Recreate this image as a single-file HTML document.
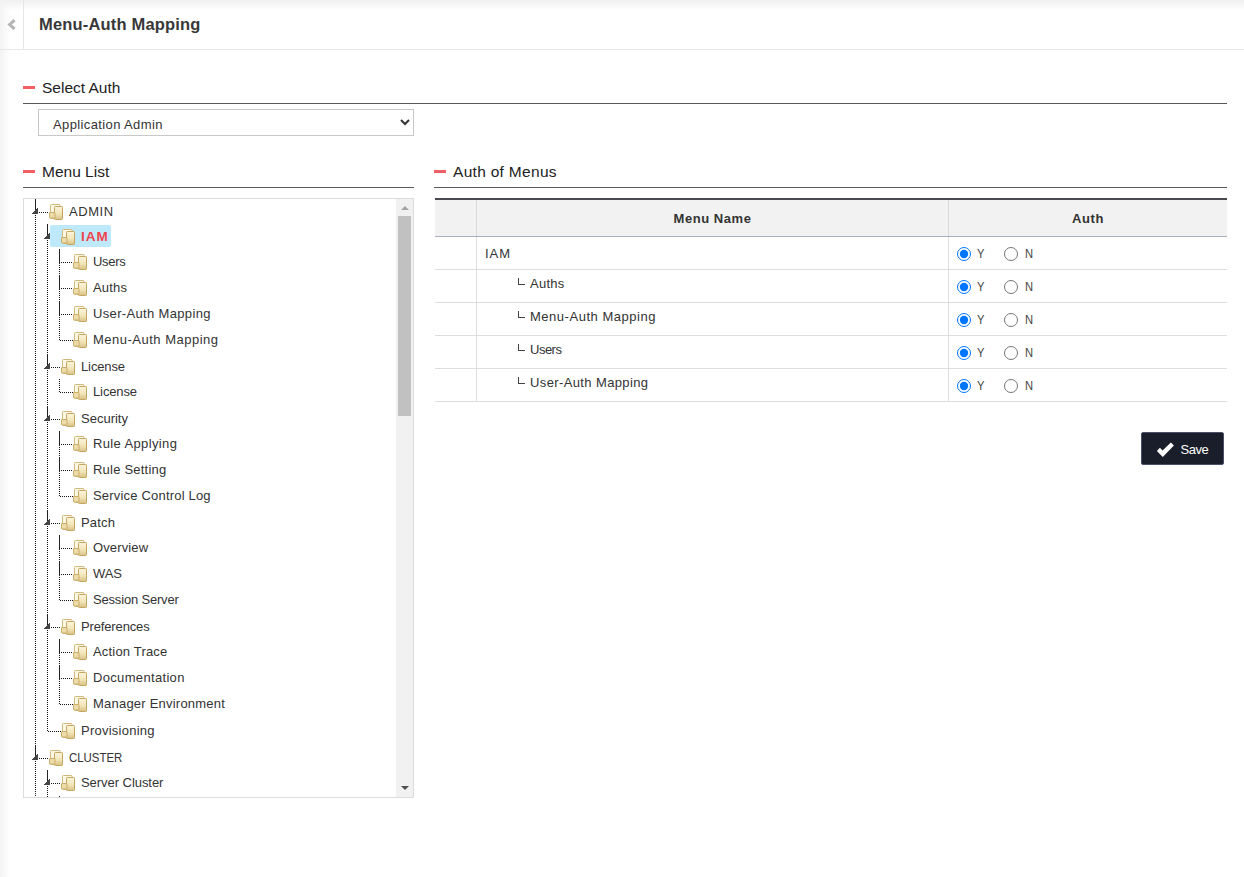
<!DOCTYPE html>
<html><head><meta charset="utf-8">
<style>
*{box-sizing:border-box}
html,body{margin:0;padding:0;width:1244px;height:877px;overflow:hidden;background:#fff;font-family:"Liberation Sans",sans-serif;color:#333}
.shadow-top{position:absolute;left:0;top:0;width:1244px;height:10px;background:linear-gradient(to bottom,#f0f0f0,rgba(255,255,255,0))}
.shadow-left{position:absolute;left:0;top:0;width:10px;height:877px;background:linear-gradient(to right,#f3f3f3,rgba(255,255,255,0))}
.hdr-sep{position:absolute;left:23px;top:0;width:1px;height:49px;background:#e6e6e6}
.hdr-line{position:absolute;left:0;top:49px;width:1244px;height:1px;background:#e8e8e8}
.back{position:absolute;left:7px;top:19px}
.title{position:absolute;left:39px;top:14px;font-size:16.5px;font-weight:bold;line-height:20px;color:#383838;white-space:nowrap;letter-spacing:0.18px}
.sec{position:absolute;height:18px}
.sec .dash{position:absolute;left:0;width:12px;height:3px;background:#f15f64}
.sec .st{position:absolute;left:19px;font-size:15.5px;line-height:18px;color:#222;white-space:nowrap}
.uline{position:absolute;height:1px;background:#58595d}
select{position:absolute;left:38px;top:109px;width:376px;height:27px;border:1px solid #c8c8c8;background:#fff;font-family:"Liberation Sans",sans-serif;font-size:13px;color:#333;padding:4px 0 0 10px;border-radius:0;outline:none;letter-spacing:0.38px}
.tree{position:absolute;left:23px;top:198px;width:391px;height:600px;border:1px solid #dcdcdc;overflow:hidden;background:#fff}
.tree i, .tree span{position:absolute;display:block}
.vd{width:1px;background:repeating-linear-gradient(to bottom,#111 0,#111 1px,transparent 1px,transparent 2px)}
.vs{width:1px;background:#222}
.hd{height:1px;background:repeating-linear-gradient(to right,#111 0,#111 1px,transparent 1px,transparent 2px)}
.tri{width:6px;height:6px;background:linear-gradient(to bottom right,transparent 46%,#444 50%)}
.sel{width:61px;height:22px;background:#bee9fb;border-radius:2px}
.fo{width:15px;height:17px}
.fo svg{display:block}
.tt{font-size:13px;line-height:16px;white-space:nowrap;color:#333}
.tt.red{color:#f0444f;font-weight:bold;letter-spacing:0.9px!important;transform:scaleX(1.04);transform-origin:0 0}
.sb{position:absolute;left:372px;top:0;width:17px;height:598px;background:#f1f1f1}
.sb .thumb{position:absolute;left:2px;top:17px;width:13px;height:200px;background:#c1c1c1}
.sb .up{position:absolute;left:5px;top:7px;width:0;height:0;border-left:4px solid transparent;border-right:4px solid transparent;border-bottom:4px solid #a3a3a3}
.sb .dn{position:absolute;left:5px;top:587px;width:0;height:0;border-left:4px solid transparent;border-right:4px solid transparent;border-top:4px solid #505050}
.tbl{position:absolute;left:435px;top:198px;width:792px;height:204px}
.th{position:absolute;left:0;top:0;width:792px;height:39px;background:#f2f2f2;border-top:2px solid #47494f;border-bottom:1px solid #a9afbd}
.th .c1{position:absolute;left:0;top:0;width:42px;height:36px;border-right:1px solid #d9d9d9}
.th .h{position:absolute;top:11px;font-size:13px;font-weight:bold;line-height:16px;text-align:center;color:#333;letter-spacing:0.55px}
.tr{position:absolute;left:0;width:792px;height:33px;border-bottom:1px solid #dedede}
.tr .c1{position:absolute;left:0;top:0;width:42px;height:32px;border-right:1px solid #dedede}
.tr .c2{position:absolute;left:42px;top:0;width:472px;height:32px;border-right:1px solid #dedede}
.tr .c3{position:absolute;left:514px;top:0;width:278px;height:32px}
.tn{position:absolute;font-size:13px;line-height:16px;white-space:nowrap;color:#333}
.corner{position:absolute;left:41px;top:8px;width:7px;height:7px;border-left:1px solid #444;border-bottom:1px solid #444}
.c3 input{position:absolute;margin:0;width:14px;height:14px;top:10px}
.ry{left:8px}
.rn{left:55px}
.yl,.nl{position:absolute;top:9px;font-size:13px;line-height:16px;color:#444;transform:scaleX(0.86);transform-origin:0 0}
.yl{left:28px}
.nl{left:75.5px}
.btn{position:absolute;left:1141px;top:432px;width:83px;height:33px;background:#1a1e2b;border:1px solid #4a5068;border-radius:2px}
.btn svg{position:absolute;left:10px;top:5px}
.btn span{position:absolute;left:38.5px;top:9px;font-size:13px;line-height:16px;color:#fff;letter-spacing:-0.5px}
</style></head><body>
<svg width="0" height="0" style="position:absolute">
<defs>
<linearGradient id="fg" x1="0" y1="0" x2="0" y2="1">
<stop offset="0" stop-color="#fbf5dc"/><stop offset="0.55" stop-color="#f2e6b8"/><stop offset="1" stop-color="#d8c186"/>
</linearGradient>
<g id="fold">
<rect x="1.5" y="0.5" width="9.5" height="14" rx="0.8" fill="#fdf8e6" stroke="#d2b97c"/>
<rect x="5.5" y="2.5" width="8" height="13" rx="0.8" fill="url(#fg)" stroke="#c4a660"/>
<rect x="0.5" y="8.5" width="5.5" height="5.5" rx="0.5" fill="#ecdcaa" stroke="#c9ad6a"/>
</g>
</defs></svg>
<div class="shadow-top"></div>
<div class="shadow-left"></div>
<div class="hdr-sep"></div>
<div class="hdr-line"></div>
<svg class="back" width="10" height="12" viewBox="0 0 10 12"><path d="M7.6 1.2 L2.6 5.6 L7.6 10" fill="none" stroke="#b5b5b5" stroke-width="3"/></svg>
<div class="title">Menu-Auth Mapping</div>

<div class="sec" style="left:23px;top:79px"><div class="dash" style="top:7px"></div><div class="st" style="top:0">Select Auth</div></div>
<div class="uline" style="left:23px;top:103px;width:1204px"></div>
<select><option>Application Admin</option></select>

<div class="sec" style="left:23px;top:163px"><div class="dash" style="top:7px"></div><div class="st" style="top:0">Menu List</div></div>
<div class="uline" style="left:23px;top:187px;width:391px"></div>

<div class="sec" style="left:434px;top:163px"><div class="dash" style="top:7px"></div><div class="st" style="top:0;letter-spacing:0.3px">Auth of Menus</div></div>
<div class="uline" style="left:434px;top:187px;width:793px"></div>

<div class="tree">
<i class="vd" style="left:11px;top:16px;height:583px"></i>
<i class="vd" style="left:23px;top:25px;height:508px"></i>
<i class="vd" style="left:35px;top:50px;height:92px"></i>
<i class="vd" style="left:35px;top:180px;height:14px"></i>
<i class="vd" style="left:35px;top:232px;height:66px"></i>
<i class="vd" style="left:35px;top:336px;height:66px"></i>
<i class="vd" style="left:35px;top:440px;height:66px"></i>
<i class="vd" style="left:23px;top:571px;height:28px"></i>
<i class="vd" style="left:35px;top:597px;height:2px"></i>
<i class="vs" style="left:11px;top:0px;height:12px"></i>
<i class="tri" style="left:8px;top:9px"></i>
<i class="hd" style="left:15px;top:13px;width:10px"></i>
<i class="fo" style="left:25px;top:5px"><svg width="15" height="17" viewBox="0 0 15 17"><use href="#fold"/></svg></i>
<span class="tt" style="left:45px;top:5px;letter-spacing:0.55px;">ADMIN</span>
<i class="vs" style="left:23px;top:25px;height:12px"></i>
<i class="tri" style="left:20px;top:34px"></i>
<i class="hd" style="left:27px;top:38px;width:10px"></i>
<i class="sel" style="left:26px;top:26px"></i>
<i class="fo" style="left:37px;top:30px"><svg width="15" height="17" viewBox="0 0 15 17"><use href="#fold"/></svg></i>
<span class="tt red" style="left:57px;top:30px;letter-spacing:0.0px;">IAM</span>
<i class="vs" style="left:35px;top:50px;height:15px"></i>
<i class="hd" style="left:37px;top:63px;width:12px"></i>
<i class="fo" style="left:49px;top:55px"><svg width="15" height="17" viewBox="0 0 15 17"><use href="#fold"/></svg></i>
<span class="tt" style="left:69px;top:55px;letter-spacing:-0.3px;">Users</span>
<i class="vs" style="left:35px;top:76px;height:15px"></i>
<i class="hd" style="left:37px;top:89px;width:12px"></i>
<i class="fo" style="left:49px;top:81px"><svg width="15" height="17" viewBox="0 0 15 17"><use href="#fold"/></svg></i>
<span class="tt" style="left:69px;top:81px;letter-spacing:0.2px;">Auths</span>
<i class="vs" style="left:35px;top:102px;height:15px"></i>
<i class="hd" style="left:37px;top:115px;width:12px"></i>
<i class="fo" style="left:49px;top:107px"><svg width="15" height="17" viewBox="0 0 15 17"><use href="#fold"/></svg></i>
<span class="tt" style="left:69px;top:107px;letter-spacing:0.34px;">User-Auth Mapping</span>
<i class="hd" style="left:36px;top:141px;width:13px"></i>
<i class="fo" style="left:49px;top:133px"><svg width="15" height="17" viewBox="0 0 15 17"><use href="#fold"/></svg></i>
<span class="tt" style="left:69px;top:133px;letter-spacing:0.5px;">Menu-Auth Mapping</span>
<i class="vs" style="left:23px;top:155px;height:12px"></i>
<i class="tri" style="left:20px;top:164px"></i>
<i class="hd" style="left:27px;top:168px;width:10px"></i>
<i class="fo" style="left:37px;top:160px"><svg width="15" height="17" viewBox="0 0 15 17"><use href="#fold"/></svg></i>
<span class="tt" style="left:57px;top:160px;letter-spacing:-0.12px;">License</span>
<i class="hd" style="left:36px;top:193px;width:13px"></i>
<i class="fo" style="left:49px;top:185px"><svg width="15" height="17" viewBox="0 0 15 17"><use href="#fold"/></svg></i>
<span class="tt" style="left:69px;top:185px;letter-spacing:-0.12px;">License</span>
<i class="vs" style="left:23px;top:207px;height:12px"></i>
<i class="tri" style="left:20px;top:216px"></i>
<i class="hd" style="left:27px;top:220px;width:10px"></i>
<i class="fo" style="left:37px;top:212px"><svg width="15" height="17" viewBox="0 0 15 17"><use href="#fold"/></svg></i>
<span class="tt" style="left:57px;top:212px;letter-spacing:0.0px;">Security</span>
<i class="vs" style="left:35px;top:232px;height:15px"></i>
<i class="hd" style="left:37px;top:245px;width:12px"></i>
<i class="fo" style="left:49px;top:237px"><svg width="15" height="17" viewBox="0 0 15 17"><use href="#fold"/></svg></i>
<span class="tt" style="left:69px;top:237px;letter-spacing:0.37px;">Rule Applying</span>
<i class="vs" style="left:35px;top:258px;height:15px"></i>
<i class="hd" style="left:37px;top:271px;width:12px"></i>
<i class="fo" style="left:49px;top:263px"><svg width="15" height="17" viewBox="0 0 15 17"><use href="#fold"/></svg></i>
<span class="tt" style="left:69px;top:263px;letter-spacing:0.22px;">Rule Setting</span>
<i class="hd" style="left:36px;top:297px;width:13px"></i>
<i class="fo" style="left:49px;top:289px"><svg width="15" height="17" viewBox="0 0 15 17"><use href="#fold"/></svg></i>
<span class="tt" style="left:69px;top:289px;letter-spacing:0.19px;">Service Control Log</span>
<i class="vs" style="left:23px;top:311px;height:12px"></i>
<i class="tri" style="left:20px;top:320px"></i>
<i class="hd" style="left:27px;top:324px;width:10px"></i>
<i class="fo" style="left:37px;top:316px"><svg width="15" height="17" viewBox="0 0 15 17"><use href="#fold"/></svg></i>
<span class="tt" style="left:57px;top:316px;letter-spacing:0.17px;">Patch</span>
<i class="vs" style="left:35px;top:336px;height:15px"></i>
<i class="hd" style="left:37px;top:349px;width:12px"></i>
<i class="fo" style="left:49px;top:341px"><svg width="15" height="17" viewBox="0 0 15 17"><use href="#fold"/></svg></i>
<span class="tt" style="left:69px;top:341px;letter-spacing:0.13px;">Overview</span>
<i class="vs" style="left:35px;top:362px;height:15px"></i>
<i class="hd" style="left:37px;top:375px;width:12px"></i>
<i class="fo" style="left:49px;top:367px"><svg width="15" height="17" viewBox="0 0 15 17"><use href="#fold"/></svg></i>
<span class="tt" style="left:69px;top:367px;letter-spacing:-0.15px;">WAS</span>
<i class="hd" style="left:36px;top:401px;width:13px"></i>
<i class="fo" style="left:49px;top:393px"><svg width="15" height="17" viewBox="0 0 15 17"><use href="#fold"/></svg></i>
<span class="tt" style="left:69px;top:393px;letter-spacing:-0.18px;">Session Server</span>
<i class="vs" style="left:23px;top:415px;height:12px"></i>
<i class="tri" style="left:20px;top:424px"></i>
<i class="hd" style="left:27px;top:428px;width:10px"></i>
<i class="fo" style="left:37px;top:420px"><svg width="15" height="17" viewBox="0 0 15 17"><use href="#fold"/></svg></i>
<span class="tt" style="left:57px;top:420px;letter-spacing:-0.14px;">Preferences</span>
<i class="vs" style="left:35px;top:440px;height:15px"></i>
<i class="hd" style="left:37px;top:453px;width:12px"></i>
<i class="fo" style="left:49px;top:445px"><svg width="15" height="17" viewBox="0 0 15 17"><use href="#fold"/></svg></i>
<span class="tt" style="left:69px;top:445px;letter-spacing:0.18px;">Action Trace</span>
<i class="vs" style="left:35px;top:466px;height:15px"></i>
<i class="hd" style="left:37px;top:479px;width:12px"></i>
<i class="fo" style="left:49px;top:471px"><svg width="15" height="17" viewBox="0 0 15 17"><use href="#fold"/></svg></i>
<span class="tt" style="left:69px;top:471px;letter-spacing:0.33px;">Documentation</span>
<i class="hd" style="left:36px;top:505px;width:13px"></i>
<i class="fo" style="left:49px;top:497px"><svg width="15" height="17" viewBox="0 0 15 17"><use href="#fold"/></svg></i>
<span class="tt" style="left:69px;top:497px;letter-spacing:0.22px;">Manager Environment</span>
<i class="hd" style="left:24px;top:532px;width:13px"></i>
<i class="fo" style="left:37px;top:524px"><svg width="15" height="17" viewBox="0 0 15 17"><use href="#fold"/></svg></i>
<span class="tt" style="left:57px;top:524px;letter-spacing:0.25px;">Provisioning</span>
<i class="vs" style="left:11px;top:546px;height:12px"></i>
<i class="tri" style="left:8px;top:555px"></i>
<i class="hd" style="left:15px;top:559px;width:10px"></i>
<i class="fo" style="left:25px;top:551px"><svg width="15" height="17" viewBox="0 0 15 17"><use href="#fold"/></svg></i>
<span class="tt" style="left:45px;top:551px;letter-spacing:0px;transform:scaleX(0.878);transform-origin:0 0;">CLUSTER</span>
<i class="vs" style="left:23px;top:571px;height:12px"></i>
<i class="tri" style="left:20px;top:580px"></i>
<i class="hd" style="left:27px;top:584px;width:10px"></i>
<i class="fo" style="left:37px;top:576px"><svg width="15" height="17" viewBox="0 0 15 17"><use href="#fold"/></svg></i>
<span class="tt" style="left:57px;top:576px;letter-spacing:-0.05px;">Server Cluster</span>
<div class="sb"><div class="up"></div><div class="thumb"></div><div class="dn"></div></div>
</div>

<div class="tbl">
<div class="th"><div class="c1"></div><div class="h" style="left:42px;width:472px;border-right:1px solid #d9d9d9;height:36px;top:0;padding-top:11px">Menu Name</div><div class="h" style="left:514px;width:278px">Auth</div></div>
<div class="tr" style="top:39px">
<div class="c1"></div>
<div class="c2"><span class="tn" style="left:8px;top:9px;letter-spacing:1.0px">IAM</span></div>
<div class="c3"><input type="radio" name="r0" checked class="ry"><span class="yl">Y</span><input type="radio" name="r0" class="rn"><span class="nl">N</span></div>
</div>
<div class="tr" style="top:72px">
<div class="c1"></div>
<div class="c2"><span class="corner"></span><span class="tn" style="left:53px;top:6px;letter-spacing:0.25px">Auths</span></div>
<div class="c3"><input type="radio" name="r1" checked class="ry"><span class="yl">Y</span><input type="radio" name="r1" class="rn"><span class="nl">N</span></div>
</div>
<div class="tr" style="top:105px">
<div class="c1"></div>
<div class="c2"><span class="corner"></span><span class="tn" style="left:53px;top:6px;letter-spacing:0.52px">Menu-Auth Mapping</span></div>
<div class="c3"><input type="radio" name="r2" checked class="ry"><span class="yl">Y</span><input type="radio" name="r2" class="rn"><span class="nl">N</span></div>
</div>
<div class="tr" style="top:138px">
<div class="c1"></div>
<div class="c2"><span class="corner"></span><span class="tn" style="left:53px;top:6px;letter-spacing:-0.5px">Users</span></div>
<div class="c3"><input type="radio" name="r3" checked class="ry"><span class="yl">Y</span><input type="radio" name="r3" class="rn"><span class="nl">N</span></div>
</div>
<div class="tr" style="top:171px">
<div class="c1"></div>
<div class="c2"><span class="corner"></span><span class="tn" style="left:53px;top:6px;letter-spacing:0.38px">User-Auth Mapping</span></div>
<div class="c3"><input type="radio" name="r4" checked class="ry"><span class="yl">Y</span><input type="radio" name="r4" class="rn"><span class="nl">N</span></div>
</div>
</div>

<div class="btn"><svg width="28" height="24" viewBox="0 0 28 24"><polygon points="4.9,12.9 7.9,9.7 10.5,12.5 18.9,4.5 21.9,7.5 10.8,18.9" fill="#fff"/></svg><span>Save</span></div>
</body></html>
